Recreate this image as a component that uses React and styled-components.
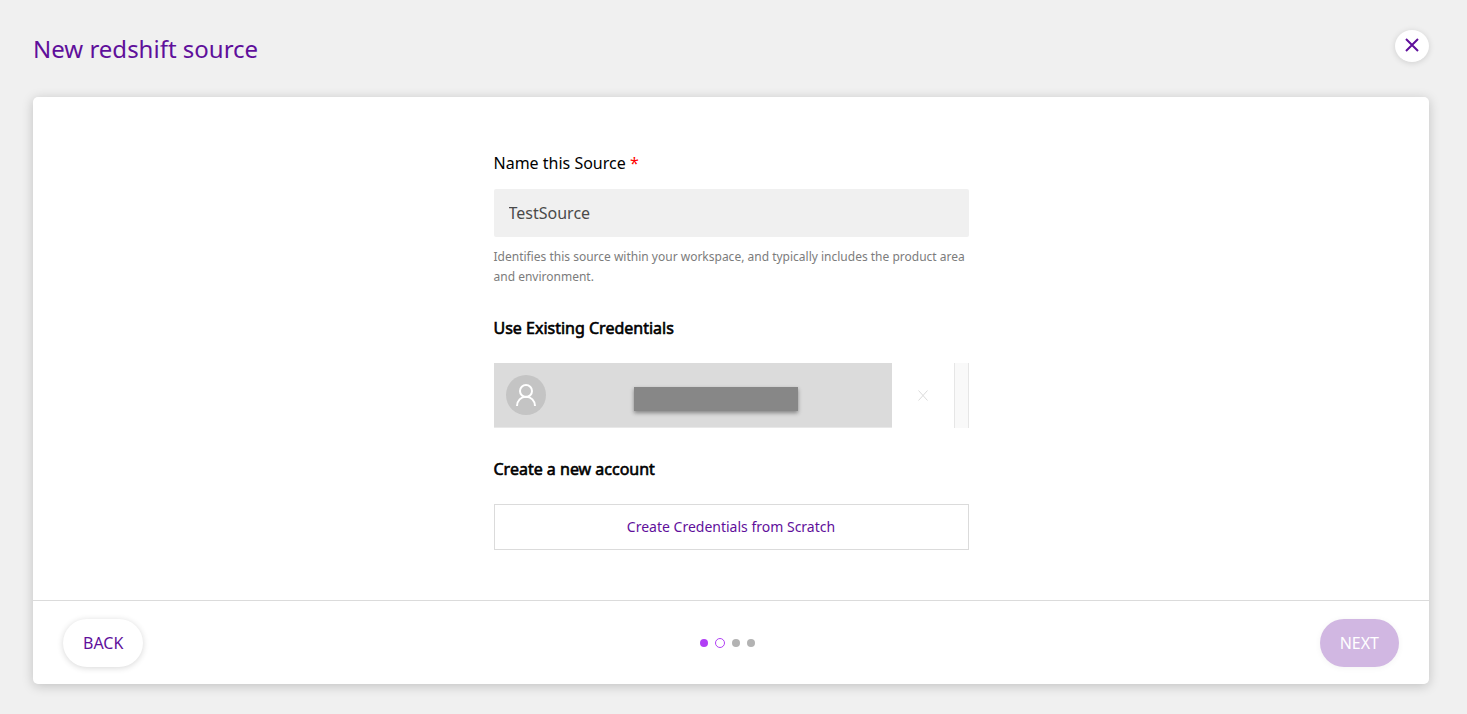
import React, { useState } from "react";
import styled, { createGlobalStyle } from "styled-components";

const purple = "#5f0f9b";
const line = "#dbdbdb";

const GlobalStyle = createGlobalStyle`
  *, *::before, *::after { box-sizing: border-box; }
  body {
    margin: 0;
    background: #f0f0f0;
    color: #000;
    font-family: "Noto Sans", sans-serif;
    font-size: 16px;
    line-height: 24px;
  }
  button, input { font: inherit; }
  button { cursor: pointer; }
`;

const Page = styled.div`
  min-height: 100vh;
  padding: 30px 38px 30px 33px;
  display: flex;
  flex-direction: column;
`;

const Header = styled.header`
  display: flex;
  align-items: flex-start;
  justify-content: space-between;
  height: 67px;
`;

const Title = styled.h1`
  margin: 0;
  padding-top: 3px;
  color: ${purple};
  font-size: 24px;
  font-weight: 400;
  line-height: 32px;
`;

const CloseButton = styled.button`
  display: grid;
  place-items: center;
  width: 34px;
  height: 32px;
  padding: 0 0 2px;
  border: 0;
  border-radius: 50%;
  background: #fff;
  color: ${purple};
  box-shadow: 0 1px 6px rgba(0, 0, 0, 0.14);
`;

const Card = styled.main`
  flex: 1;
  display: flex;
  flex-direction: column;
  border-radius: 5px;
  background: #fff;
  box-shadow: 0 2px 12px rgba(0, 0, 0, 0.2);
`;

const Form = styled.form`
  flex: 1;
  width: 100%;
  max-width: 475px;
  margin: 0 auto;
  padding: 54px 0 50px;
`;

const Label = styled.label`
  display: block;
  margin-bottom: 14px;
`;

const Required = styled.span`
  color: #f00;
`;

const TextInput = styled.input`
  display: block;
  width: 100%;
  height: 48px;
  padding: 0 15px;
  border: 0;
  border-radius: 2px;
  outline: 0;
  background: #f0f0f0;
  color: #4a4a4a;
`;

const Hint = styled.p`
  margin: 10px 0 0;
  color: #7c7c7c;
  font-size: 12px;
  line-height: 20px;
`;

const SectionTitle = styled.h2`
  margin: 29px 0 23px;
  font-size: 16px;
  font-weight: 400;
  line-height: 24px;
  -webkit-text-stroke: 0.6px currentColor;
`;

const CredentialList = styled.div`
  display: flex;
  height: 65px;
`;

const Credential = styled.button`
  flex: 1;
  display: flex;
  align-items: flex-start;
  padding: 12px;
  border: 0;
  border-bottom: 1px solid #e8e8e8;
  background: ${line};
`;

const Avatar = styled.span`
  display: grid;
  place-items: center;
  width: 40px;
  height: 40px;
  border-radius: 50%;
  background: #c4c4c4;
  color: #fff;
`;

const HiddenName = styled.span`
  width: 164px;
  height: 24px;
  margin: 12px 0 0 88px;
  background: #878787;
  box-shadow: 0 2px 4px rgba(0, 0, 0, 0.4);
`;

const RemoveButton = styled.button`
  display: grid;
  place-items: center;
  width: 62px;
  padding: 0;
  border: 0;
  background: transparent;
  color: ${line};
`;

const ScrollTrack = styled.div`
  width: 15px;
  border: solid #e6e6e6;
  border-width: 0 1px;
  background: #f9f9f9;
`;

const OutlineButton = styled.button`
  display: block;
  width: 100%;
  height: 46px;
  border: 1px solid ${line};
  background: #fff;
  color: ${purple};
  font-size: 14px;
`;

const Footer = styled.footer`
  display: flex;
  align-items: center;
  justify-content: space-between;
  padding: 18px 30px 17px;
  border-top: 1px solid ${line};
`;

const PillButton = styled.button`
  height: 48px;
  padding: 0 20px;
  border: 0;
  border-radius: 24px;
  background: ${(p) => (p.disabled ? "#d1b7e2" : "#fff")};
  color: ${(p) => (p.disabled ? "#fff" : purple)};
  box-shadow: 0 1px 6px rgba(0, 0, 0, ${(p) => (p.disabled ? 0.05 : 0.16)});
`;

const Steps = styled.ol`
  display: flex;
  align-items: center;
  justify-content: space-between;
  width: 56px;
  margin: 0 8px 0 0;
  padding: 0;
  list-style: none;
`;

const stepLook = {
  done: "background: #b13ff5;",
  current: "width: 10px; height: 10px; border: 1px solid #b13ff5;",
  next: "background: #b3b3b3;",
};

const Step = styled.li`
  width: 8px;
  height: 8px;
  border-radius: 50%;
  ${(p) => stepLook[p.$state]}
`;

const CloseIcon = () => (
  <svg width="14" height="14" viewBox="0 0 14 14" fill="none" stroke="currentColor" strokeWidth="2" aria-hidden="true">
    <path d="M1 1 13 13M13 1 1 13" />
  </svg>
);

const UserIcon = () => (
  <svg width="22" height="24" viewBox="0 0 22 24" fill="none" stroke="currentColor" strokeWidth="2" aria-hidden="true">
    <circle cx="11" cy="8" r="6" />
    <path d="M2 23C2 17.5 6 13.8 11 13.8S20 17.5 20 23" />
  </svg>
);

const RemoveIcon = () => (
  <svg width="10" height="11" viewBox="0 0 10 11" fill="none" stroke="currentColor" aria-hidden="true">
    <path d="M.5 .5 9.5 10.5M9.5 .5 .5 10.5" />
  </svg>
);

export default function App() {
  const [name, setName] = useState("TestSource");

  return (
    <>
      <GlobalStyle />
      <Page>
        <Header>
          <Title>New redshift source</Title>
          <CloseButton type="button" aria-label="Close">
            <CloseIcon />
          </CloseButton>
        </Header>
        <Card>
          <Form id="source-form">
            <Label htmlFor="source-name">
              Name this Source <Required>*</Required>
            </Label>
            <TextInput
              id="source-name"
              aria-describedby="source-hint"
              value={name}
              onChange={(e) => setName(e.target.value)}
            />
            <Hint id="source-hint">
              Identifies this source within your workspace, and typically includes the product area and environment.
            </Hint>
            <SectionTitle>Use Existing Credentials</SectionTitle>
            <CredentialList>
              <Credential type="button" aria-label="Use saved account">
                <Avatar>
                  <UserIcon />
                </Avatar>
                <HiddenName />
              </Credential>
              <RemoveButton type="button" aria-label="Remove account">
                <RemoveIcon />
              </RemoveButton>
              <ScrollTrack />
            </CredentialList>
            <SectionTitle>Create a new account</SectionTitle>
            <OutlineButton type="button">Create Credentials from Scratch</OutlineButton>
          </Form>
          <Footer>
            <PillButton type="button">BACK</PillButton>
            <Steps aria-label="Progress">
              <Step $state="done" />
              <Step $state="current" aria-current="step" />
              <Step $state="next" />
              <Step $state="next" />
            </Steps>
            <PillButton type="submit" form="source-form" disabled>
              NEXT
            </PillButton>
          </Footer>
        </Card>
      </Page>
    </>
  );
}
